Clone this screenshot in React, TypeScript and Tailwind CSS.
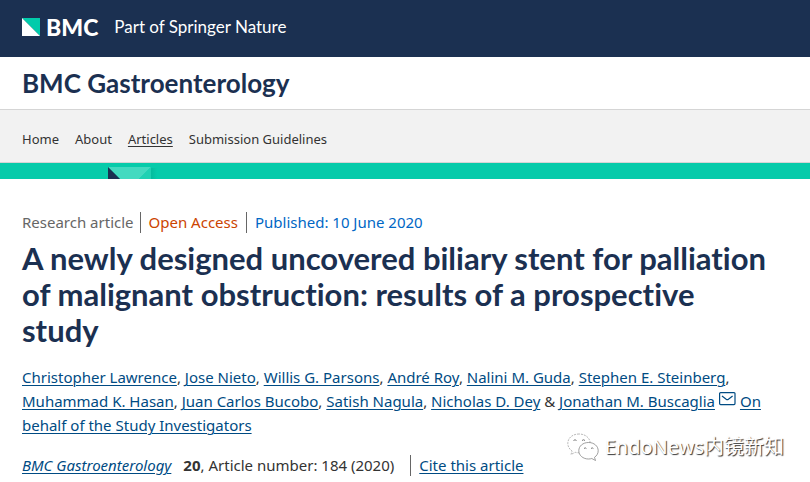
import React from "react";

const authors = [
  "Christopher Lawrence",
  "Jose Nieto",
  "Willis G. Parsons",
  "André Roy",
  "Nalini M. Guda",
  "Stephen E. Steinberg",
  "Muhammad K. Hasan",
  "Juan Carlos Bucobo",
  "Satish Nagula",
  "Nicholas D. Dey",
];

const navItems = ["Home", "About", "Articles", "Submission Guidelines"];

const linkClass = "text-[#004b83] underline decoration-1 underline-offset-2";

function BrandMark() {
  return (
    <svg width="18" height="18" viewBox="0 0 18 18" aria-hidden="true">
      <path d="M0 0h18v18z" fill="#01cbab" />
      <path d="M0 0v18h18z" fill="#fff" />
    </svg>
  );
}

function Ribbon() {
  return (
    <div className="h-4 bg-[#06cbaa] pl-[108px]">
      <svg width="54" height="16" viewBox="0 0 54 16" aria-hidden="true">
        <defs>
          <linearGradient id="fold" x1="0" x2="1">
            <stop offset="0" stopColor="#05b99b" />
            <stop offset="1" stopColor="#06cbaa" />
          </linearGradient>
        </defs>
        <path d="M42 5h7v11h-7z" fill="url(#fold)" />
        <path d="M0 4h43L31 16H12z" fill="#43dac0" />
        <path d="M43 4v12H31z" fill="#20d1b3" />
        <path d="M0 4v12h12z" fill="#1b3051" />
      </svg>
    </div>
  );
}

function Envelope() {
  return (
    <svg
      className="mx-1 inline-block align-[1px]"
      width="17"
      height="14"
      viewBox="0 0 17 14"
      fill="none"
      stroke="#004b83"
      strokeWidth="1.2"
      aria-hidden="true"
    >
      <rect x="0.6" y="0.6" width="15.4" height="12" rx="1" />
      <path d="M3 4l4.200 3.300q1.100.8 2.200 0L13.600 4" />
    </svg>
  );
}

function ChatBubbles() {
  return (
    <svg width="32" height="28" viewBox="0 0 32 28" fill="#fff" aria-hidden="true">
      <g stroke="#999" strokeWidth="0.7">
        <path
          d="M12 1C5.500 1 .8 5 .8 10.400c0 3.200 1.600 5.800 4.300 7.600L4 21.500l4.200-2.200c1.200.4 2.500.5 3.800.5 6.400 0 11.200-4 11.200-9.400S18.400 1 12 1z"
          strokeDasharray="2 1"
        />
        <path
          d="M21.500 9.500c-5.600 0-9.700 3.600-9.700 8.200s4.100 8.300 9.700 8.300c1.200 0 2.300-.2 3.300-.5l3.700 2-1-3.200c2.300-1.500 3.700-3.900 3.700-6.600 0-4.600-4.100-8.200-9.700-8.200z"
          stroke="#777"
        />
      </g>
      <g stroke="#777" strokeWidth="1" fill="none">
        <path d="M6.500 7.500q1.500-1.500 3 0M15 7.500q1.500-1.500 3 0M17 15.500q1.200-1.300 2.400 0M24 15.500q1.200-1.300 2.400 0" />
      </g>
    </svg>
  );
}

export default function App() {
  return (
    <div className="relative min-h-screen bg-white font-['Noto_Sans','Open_Sans',sans-serif] text-[15px] leading-6 text-[#333]">
      <header>
        <div className="flex h-[57px] items-center bg-[#1b3051] px-[22px] pb-1 font-['Lato',sans-serif] text-white">
          <a href="#bmc" className="flex items-center gap-[6px]">
            <BrandMark />
            <span className="text-[23px] font-black">BMC</span>
          </a>
          <span className="ml-4 text-[17px]">Part of Springer Nature</span>
        </div>
        <div className="flex h-[53px] items-center border-b border-[#d5d5d5] px-[22px]">
          <a href="#journal" className="font-['Lato',sans-serif] text-[26px] leading-9 font-bold text-[#1b3051]">
            BMC Gastroenterology
          </a>
        </div>
        <nav className="flex h-[53px] items-center gap-4 border-b border-[#d5d5d5] bg-[#f2f2f2] px-[22px] pt-[6px] text-[13px]">
          {navItems.map((item) => (
            <a
              key={item}
              href={"#" + item.toLowerCase().replace(" ", "-")}
              className={item === "Articles" ? "underline underline-offset-2" : ""}
            >
              {item}
            </a>
          ))}
        </nav>
        <Ribbon />
      </header>

      <main className="px-[22px] pt-8">
        <ul className="flex h-[22px] items-center">
          <li className="border-r border-[#666] pr-[6px] leading-[21px] text-[#666]">Research article</li>
          <li className="border-r border-[#666] px-2 leading-[21px] text-[#c40]">Open Access</li>
          <li className="pl-2 leading-[21px]">
            <a href="#published" className="text-[#0067c5]">
              Published: 10 June 2020
            </a>
          </li>
        </ul>
        <h1 className="mt-[7px] pr-4 font-['Lato',sans-serif] text-[31px] leading-9 font-bold text-[#1b3051] [font-variant-ligatures:none]">
          A newly designed uncovered biliary stent for palliation of malignant obstruction: results of a prospective
          study
        </h1>
        <p className="mt-[17px]">
          {authors.map((name, i) => (
            <React.Fragment key={name}>
              <a href="#author" className={linkClass + " whitespace-nowrap"}>
                {name}
              </a>
              {i < authors.length - 1 ? ", " : " & "}
            </React.Fragment>
          ))}
          <a href="#author" className={linkClass}>
            Jonathan M. Buscaglia
          </a>
          <a href="#mail" aria-label="Email the author">
            <Envelope />
          </a>
          <a href="#group" className={linkClass}>
            On behalf of the Study Investigators
          </a>
        </p>
        <div className="mt-4 flex items-center">
          <a href="#journal" className={linkClass + " italic"}>
            BMC Gastroenterology
          </a>
          <span className="ml-3">
            <b>20</b>, Article number: 184 (2020)
          </span>
          <a href="#cite" className={"ml-4 border-l border-[#666] pl-2 leading-[21px] " + linkClass}>
            Cite this article
          </a>
        </div>
      </main>

      <div className="absolute right-[26px] bottom-[21px] flex items-center gap-[6px]">
        <ChatBubbles />
        <span className="font-['Noto_Sans','Noto_Sans_CJK_SC',sans-serif] text-[20px] leading-7 text-white [text-shadow:1px_1px_1px_#333]">
          EndoNews内镜新知
        </span>
      </div>
    </div>
  );
}
